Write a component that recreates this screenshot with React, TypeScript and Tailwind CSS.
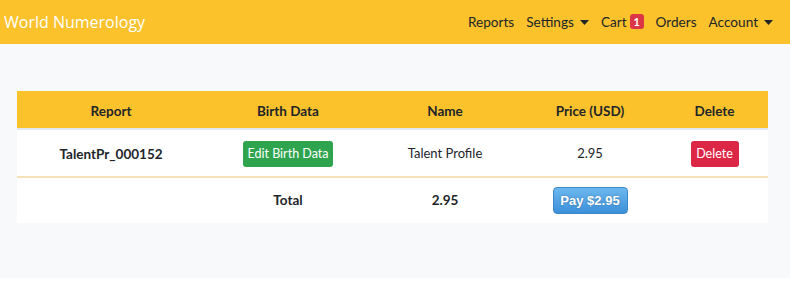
const font = { fontFamily: 'Lato, "Open Sans", sans-serif' };

const navItems = [
  { label: 'Reports' },
  { label: 'Settings', caret: true },
  { label: 'Cart', badge: '1' },
  { label: 'Orders' },
  { label: 'Account', caret: true },
];

function Caret() {
  return (
    <svg width="9" height="5" viewBox="0 0 9 5" className="ml-[6px] mt-[1px]">
      <path d="M0 0 L9 0 L4.5 5 Z" fill="#212529" />
    </svg>
  );
}

const cols = 'grid grid-cols-[188px_166px_148px_142px_107px] items-center text-center';

export default function App() {
  return (
    <div className="w-[790px] h-[292px] bg-white text-[#212529]" style={font}>
      <header className="h-[44px] bg-[#fbc22c] flex items-center justify-between pl-[4px] pr-[17px]">
        <span className="text-[16px] text-white" style={{ fontFamily: '"Open Sans", sans-serif' }}>
          World Numerology
        </span>
        <nav className="flex items-center gap-[12px] text-[13.6px]">
          {navItems.map((item) => (
            <span key={item.label} className="flex items-center">
              {item.label}
              {item.caret && <Caret />}
              {item.badge && (
                <span className="ml-[3px] w-[14px] h-[15px] rounded-[3px] bg-[#dc3545] text-white text-[11px] font-bold flex items-center justify-center">
                  {item.badge}
                </span>
              )}
            </span>
          ))}
        </nav>
      </header>

      <main className="h-[234px] bg-[#f8f9fa] px-[17px] pt-[47px]">
        <div className="w-[751px] bg-white text-[13px]">
          <div className={`${cols} h-[39px] pt-[3px] bg-[#fbc22c] font-bold text-[13.5px] border-b-2 border-[#e3e8ee]`}>
            <span>Report</span>
            <span>Birth Data</span>
            <span>Name</span>
            <span>Price (USD)</span>
            <span>Delete</span>
          </div>
          <div className={`${cols} h-[48px] pt-[2px] border-b-2 border-[#f5e2b8]`}>
            <span className="font-bold text-[13.5px]">TalentPr_000152</span>
            <span className="flex justify-center">
              <button className="h-[26px] w-[90px] rounded-[3px] bg-[#2ea44f] text-white text-[12.5px] whitespace-nowrap">
                Edit Birth Data
              </button>
            </span>
            <span>Talent Profile</span>
            <span>2.95</span>
            <span className="flex justify-center">
              <button className="h-[26px] w-[48px] rounded-[3px] bg-[#dc2646] text-white text-[12.5px]">Delete</button>
            </span>
          </div>
          <div className={`${cols} h-[45px] font-bold text-[13.5px]`}>
            <span></span>
            <span>Total</span>
            <span>2.95</span>
            <span className="flex justify-center">
              <button
                className="h-[27px] w-[75px] rounded-[4px] border border-[#3a86c8] bg-gradient-to-b from-[#6cb8ee] to-[#3b90d9] text-white text-[13px] font-bold [text-shadow:0_0_2px_rgba(0,0,0,0.3)]"
                style={{ fontFamily: '"Liberation Sans", Arial, sans-serif' }}
              >
                Pay $2.95
              </button>
            </span>
            <span></span>
          </div>
        </div>
      </main>
    </div>
  );
}
